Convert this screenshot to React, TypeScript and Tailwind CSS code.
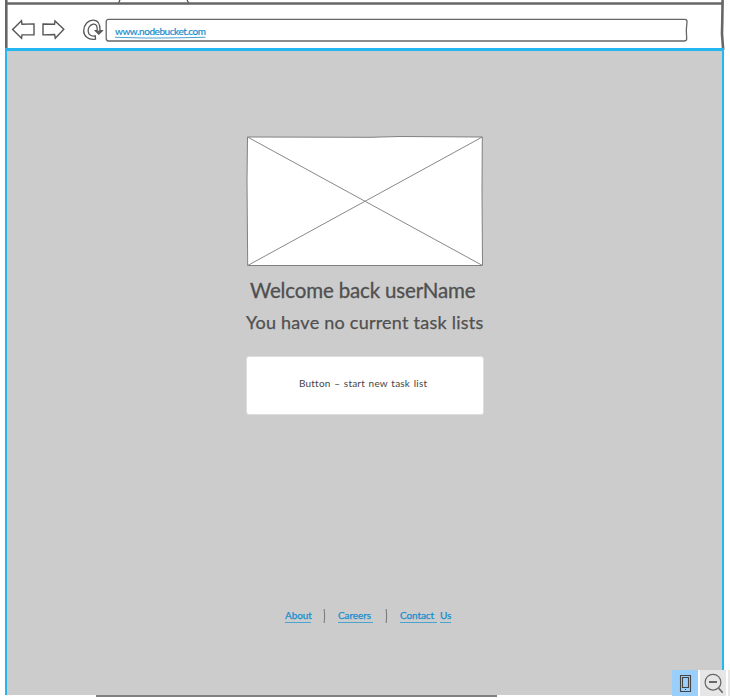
import React from "react";

const INK = "#555555";

function BrowserBar() {
  return (
    <header className="relative ml-[5px] h-12 w-[720px] bg-white">
      <svg className="block h-[50px] w-[720px]" viewBox="5 0 720 50" fill="none" stroke={INK}>
        <path d="M6.3 0V50" stroke="#666" strokeWidth="2.6" />
        <path d="M722.6 0L722.3 20L722 34L723.2 50" stroke="#666" strokeWidth="2.6" />
        <path d="M5 3.500H722" stroke="#666" strokeWidth="2.400" />
        <path d="M120 0L118.700 2.500M187 0L188.500 2.500" stroke="#444" strokeWidth="1.200" />
        <path d="M12.600 29.500L21.500 20.800L22 24.200L34 23.900V34.800L22 34.900L21.600 38.200Z" strokeWidth="1.400" />
        <path d="M43 24L54.500 24.300L55 20.900L63.800 29.300L55.300 38.300L54.600 34.500L43 34.900Z" strokeWidth="1.400" />
        <path d="M95.500 39.200C88 40.500 83.500 35.500 83.700 30.500C84 24.500 88 20 93.500 20.200C98.500 20.500 100.200 25 100 30.500L102.200 30.700L98.800 34L95.300 30.700L97.200 30.300C97.400 26.500 96.500 23.700 93.200 24.200C89.500 25 87.700 28.500 88.200 31.500C88.700 34.800 91.300 36.500 95.300 36Z" strokeWidth="1.300" />
        <path d="M96 31L102 31L98.800 34Z" fill="#666" strokeWidth="0.800" />
        <path d="M108 19.400H685Q687.200 19.600 687 22L686.300 30L686.700 39Q686.500 41 684 41H108.500Q106 40.800 106.200 38V22Q106 19.700 108 19.400Z" stroke="#666" strokeWidth="1.300" />
        <path d="M115 37.200Q150 38.600 205.500 37.300" stroke="#48a3d0" strokeWidth="1.100" />
      </svg>
      <div className="absolute left-[110px] top-[23px] w-[92px] whitespace-nowrap text-[10px] leading-4 tracking-[-0.430px] text-[#168dcc] [-webkit-text-stroke:0.200px_#168dcc]">
        www.nodebucket.com
      </div>
    </header>
  );
}

function FooterLink({ label, className }: { label: string; className: string }) {
  return (
    <a className={`block h-[15px] whitespace-nowrap border-b border-[#48a3d0] text-[10px] leading-[14px] tracking-[-0.100px] text-[#168dcc] [-webkit-text-stroke:0.250px_#168dcc] ${className}`}>
      {label}
    </a>
  );
}

function Divider() {
  return (
    <svg className="h-[15px] w-[3px]" viewBox="0 0 3 15" fill="none" stroke="#777">
      <path d="M1.200 1L1.600 8L1.200 15" />
    </svg>
  );
}

function Toolbar() {
  return (
    <div className="absolute left-[672px] top-[670px] flex h-[26px] w-[58px] gap-[2px] bg-white">
      <div className="h-[26px] w-[26px] bg-[#99cffa]">
        <svg width="26" height="26" fill="none" stroke="#444">
          <path d="M8.500 5.500H18.500V21.500H8.500ZM10.500 7.500H16.500V17.500H10.500Z" strokeWidth="1.100" />
          <path d="M13 19.500H14" />
        </svg>
      </div>
      <div className="h-[26px] w-[26px] bg-[#e6e6e6]">
        <svg width="26" height="26" fill="none" stroke="#666">
          <circle cx="13" cy="12.200" r="7.900" strokeWidth="1.200" />
          <path d="M9 12H17" strokeWidth="2" />
          <path d="M18.700 18.200L22.700 22.700" strokeWidth="1.600" />
        </svg>
      </div>
      <div className="h-[26px] w-[2px] bg-[#e6e6e6]" />
    </div>
  );
}

export default function App() {
  return (
    <div className="relative h-[698px] w-[730px] overflow-hidden bg-white font-['Lato','Open_Sans',sans-serif]">
      <BrowserBar />
      <main className="relative ml-[5px] flex h-[647px] w-[719px] flex-col items-start border-x-2 border-t-[3px] border-[#25b5f0] bg-[#ccc]">
        <svg className="ml-[239px] mt-[84px] block h-[132px] w-[238px]" viewBox="246 135 238 132" stroke="#808080">
          <path d="M247.500 137L370 137.300L400 136.500L482.300 137L482 190L482.500 265.500L320 265.500L247.700 265.500L247 180Z" fill="white" />
          <path d="M247.500 137L482.500 265.500M482.300 137L247.700 265.500" fill="none" stroke="#888" />
        </svg>
        <h1 className="ml-[243px] mt-[9px] h-8 whitespace-nowrap text-[20.500px] leading-7 tracking-[-0.150px] text-[#505050] [-webkit-text-stroke:0.300px_#505050]">
          Welcome back userName
        </h1>
        <h2 className="ml-[239px] h-8 whitespace-nowrap text-[18px] leading-7 tracking-[0.240px] text-[#505050] [-webkit-text-stroke:0.250px_#505050]">
          You have no current task lists
        </h2>
        <button className="ml-[239px] mt-[16px] flex h-[59px] w-[238px] items-start rounded-[3px] border border-[#dedede] bg-white pl-[52px] pt-[18px] text-[10px] leading-4 tracking-[0.200px] text-[#444] [word-spacing:0.900px]">
          <span className="whitespace-nowrap">Button – start new task list</span>
        </button>
        <nav className="ml-[278px] mt-[193px] flex h-[15px] items-start">
          <FooterLink label="About" className="w-[26px]" />
          <span className="ml-[12px]"><Divider /></span>
          <FooterLink label="Careers" className="ml-[12px] w-[35px]" />
          <span className="ml-[12px]"><Divider /></span>
          <FooterLink label="Contact" className="ml-[12px] w-[37px]" />
          <FooterLink label="Us" className="ml-[3px] w-[11px]" />
        </nav>
      </main>
      <div className="ml-[96px] h-[2px] w-[401px] bg-[#808080]" />
      <Toolbar />
    </div>
  );
}
